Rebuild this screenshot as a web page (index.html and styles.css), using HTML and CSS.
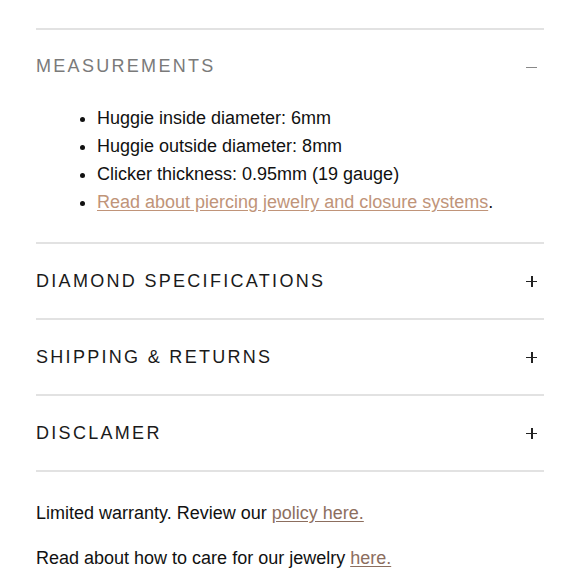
FILE: index.html
```html
<!DOCTYPE html>
<html>
<head>
<meta charset="utf-8">
<link rel="stylesheet" href="styles.css">
</head>
<body>
<div class="page">
  <section class="acc open">
    <div class="acc-head"><span class="title muted">MEASUREMENTS</span><span class="icon minus"></span></div>
    <ul class="list">
      <li>Huggie inside diameter: 6mm</li>
      <li>Huggie outside diameter: 8mm</li>
      <li>Clicker thickness: 0.95mm (19 gauge)</li>
      <li><a class="link-light" href="#">Read about piercing jewelry and closure systems</a>.</li>
    </ul>
  </section>
  <section class="acc">
    <div class="acc-head"><span class="title">DIAMOND SPECIFICATIONS</span><span class="icon plus"></span></div>
  </section>
  <section class="acc">
    <div class="acc-head"><span class="title">SHIPPING &amp; RETURNS</span><span class="icon plus"></span></div>
  </section>
  <section class="acc">
    <div class="acc-head"><span class="title">DISCLAMER</span><span class="icon plus"></span></div>
  </section>
  <div class="notes">
    <p>Limited warranty. Review our <a class="link-dark" href="#">policy here.</a></p>
    <p>Read about how to care for our jewelry <a class="link-dark" href="#">here.</a></p>
  </div>
</div>
</body>
</html>
```
FILE: styles.css
```css
html, body { margin: 0; padding: 0; background: #fff; }
body { font-family: "Liberation Sans", Arial, sans-serif; color: #111; }
.page { padding: 28px 36px 0 36px; }
.acc { border-top: 2px solid #e2e2e2; }
.acc-head {
  height: 74px;
  display: flex;
  align-items: center;
  justify-content: space-between;
}
.title { font-size: 18px; letter-spacing: 2.3px; color: #1a1a1a; }
.title.muted { color: #7a7a7a; margin-top: -2px; }
.icon { position: relative; width: 11px; height: 11px; margin-right: 7px; }
.icon::before { content: ""; position: absolute; left: 0; top: 5px; width: 11px; height: 1.5px; background: #222; }
.plus::after { content: ""; position: absolute; left: 5px; top: 0; width: 1.5px; height: 11px; background: #222; }
.minus::before { background: #888; }
.list { margin: 0; padding: 0 0 26px 61px; font-size: 18px; line-height: 28px; }
.link-light { color: #c09479; text-decoration: underline; text-underline-offset: 2px; }
.link-dark { color: #8c6e5e; text-decoration: underline; text-underline-offset: 2px; }
.notes { border-top: 2px solid #e2e2e2; padding-top: 31px; font-size: 18px; }
.notes p { margin: 0 0 25px 0; line-height: 20px; }
```
